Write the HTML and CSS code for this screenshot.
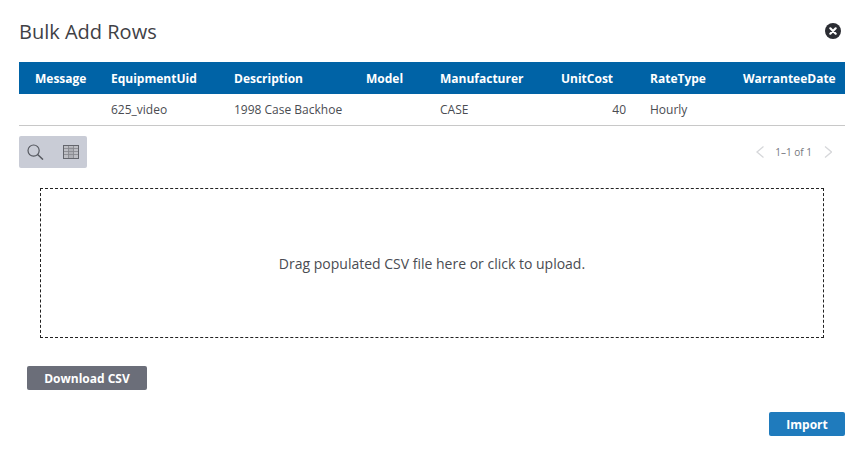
FILE: index.html
```html
<!DOCTYPE html>
<html lang="en">
<head>
<meta charset="utf-8">
<title>Bulk Add Rows</title>
<link rel="stylesheet" href="styles.css">
</head>
<body>
<main class="dialog">
  <header class="title-bar">
    <h1 class="title">Bulk Add Rows</h1>
    <button class="close" aria-label="Close">
      <svg width="16" height="16" viewBox="0 0 16 16"><circle cx="8" cy="8" r="8" fill="#2b2d33"/><path d="M5.3 5.3l5.4 5.4M10.7 5.3l-5.4 5.4" stroke="#fff" stroke-width="2.2" stroke-linecap="round"/></svg>
    </button>
  </header>
  <section class="table">
    <div class="row head">
      <div class="cell first">Message</div>
      <div class="cell">EquipmentUid</div>
      <div class="cell">Description</div>
      <div class="cell">Model</div>
      <div class="cell">Manufacturer</div>
      <div class="cell">UnitCost</div>
      <div class="cell">RateType</div>
      <div class="cell">WarranteeDate</div>
    </div>
    <div class="row body">
      <div class="cell first"></div>
      <div class="cell">625_video</div>
      <div class="cell">1998 Case Backhoe</div>
      <div class="cell"></div>
      <div class="cell">CASE</div>
      <div class="cell num">40</div>
      <div class="cell">Hourly</div>
      <div class="cell"></div>
    </div>
  </section>
  <div class="toolbar">
    <div class="tools">
      <svg class="tool" width="17" height="16" viewBox="0 0 17 16" fill="none" stroke="#55585f"><circle cx="6.6" cy="6.6" r="5.6" stroke-width="1.2"/><path d="M10.6 10.6l5.4 5" stroke-width="1.4"/></svg>
      <svg class="tool" width="16" height="14" viewBox="0 0 16 14" fill="none"><rect x="0.5" y="0.5" width="15" height="13" fill="#bdbec4" stroke="#63656c"/><rect x="5" y="2" width="6" height="11" fill="#aeafb5"/><path d="M1 3.5h14M1 6.5h14M1 9.5h14" stroke="#85878d" stroke-width="0.8"/><path d="M5.5 1v12M10.5 1v12" stroke="#85878d" stroke-width="0.8"/></svg>
    </div>
    <div class="pager">
      <svg width="10" height="14" viewBox="0 0 10 14" fill="none" stroke="#d6d7da" stroke-width="1.3"><path d="M8.5 1.5L2 7l6.5 5.5"/></svg>
      <span class="pager-text">1–1 of 1</span>
      <svg width="10" height="14" viewBox="0 0 10 14" fill="none" stroke="#d6d7da" stroke-width="1.3"><path d="M3 1.5L9.5 7 3 12.5"/></svg>
    </div>
  </div>
  <div class="drop">Drag populated CSV file here or click to upload.</div>
  <div class="download-row"><button class="btn grey">Download CSV</button></div>
  <div class="import-row"><button class="btn blue">Import</button></div>
</main>
</body>
</html>
```
FILE: styles.css
```css
* { box-sizing: border-box; }
html, body { margin: 0; padding: 0; background: #fff; }
body { font-family: "Open Sans", "Liberation Sans", sans-serif; color: #444; overflow: hidden; }
.dialog { width: 864px; height: 460px; padding: 0 19px; display: flex; flex-direction: column; }
.title-bar { height: 62px; display: flex; align-items: center; justify-content: space-between; }
.title { margin: 0; font-size: 20px; font-weight: 400; color: #3f4146; }
.close { border: 0; background: none; padding: 0; margin-right: 4px; width: 16px; height: 16px; display: flex; }
.table { width: 826px; border-bottom: 1px solid #c8c8c8; }
.row { display: grid; grid-template-columns: 80px 123px 132px 74px 121px 89px 93px 114px; align-items: center; font-size: 12px; }
.head { height: 32px; background: #0063a6; color: #fff; font-weight: 700; }
.body { height: 31px; color: #4a4c52; }
.cell { padding-left: 12px; white-space: nowrap; }
.cell.first { padding-left: 16px; }
.cell.num { text-align: right; padding-right: 12px; }
.toolbar { margin-top: 10px; height: 32px; display: flex; justify-content: space-between; align-items: center; }
.tools { width: 68px; height: 32px; background: #c9ccd6; border-radius: 2px; display: flex; align-items: center; gap: 19px; padding-left: 8px; }
.tool { display: block; }
.pager { display: flex; align-items: center; gap: 10px; margin-right: 13px; color: #75777d; }
.pager-text { font-size: 10px; }
.drop { margin: 20px 21px 0; width: 784px; height: 150px; border: 1px dashed #222; display: flex; align-items: center; justify-content: center; font-size: 14px; color: #4a4c52; }
.btn { border: 0; border-radius: 2px; color: #fff; font-family: inherit; font-weight: 700; font-size: 12px; height: 24px; padding: 0; display: block; }
.grey { width: 120px; background: #6b6e79; }
.blue { width: 76px; background: #1f7bbd; }
.download-row { margin-top: 28px; padding-left: 8px; }
.import-row { margin-top: 22px; display: flex; justify-content: flex-end; }
```
